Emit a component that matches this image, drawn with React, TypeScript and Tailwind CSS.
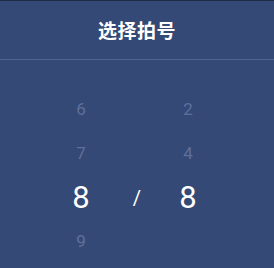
export default function App() {
  const left = ['6', '7', '8', '9'];
  const right = ['2', '4', '8', ''];
  const selected = 2;

  return (
    <div className="w-[274px] h-[268px] bg-[#344975] overflow-hidden font-['Roboto','Noto_Sans_CJK_SC',sans-serif]">
      <div className="h-px bg-[#1f2a45]" />
      {/* header */}
      <div className="h-[59px] flex items-center justify-center border-b border-[#51638f]">
        <h1 className="text-[19px] font-bold text-white tracking-[0.5px] font-['Noto_Sans_CJK_SC',sans-serif]">选择拍号</h1>
      </div>

      {/* picker */}
      <div className="flex pt-[28px]">
        <div className="ml-[51px] w-[60px] flex flex-col">
          {left.map((n, i) => (
            <div
              key={i}
              className={`h-[44px] flex items-center justify-center ${i === selected ? 'text-[31px] text-white' : 'text-[17px] text-[#5f709b]'}`}
            >
              {n}
            </div>
          ))}
        </div>
        <div className="w-[52px] flex flex-col">
          <div className="h-[88px]" />
          <div className="h-[44px] flex items-center justify-center text-[20px] text-white">/</div>
        </div>
        <div className="w-[50px] flex flex-col">
          {right.map((n, i) => (
            <div
              key={i}
              className={`h-[44px] flex items-center justify-center ${i === selected ? 'text-[31px] text-white' : 'text-[17px] text-[#5f709b]'}`}
            >
              {n}
            </div>
          ))}
        </div>
      </div>
    </div>
  );
}
